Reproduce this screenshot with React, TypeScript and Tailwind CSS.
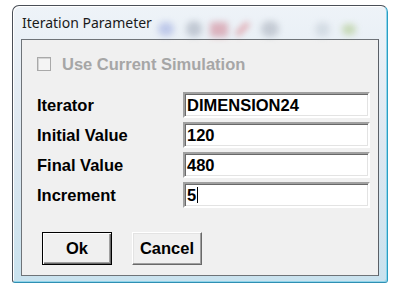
import React from "react";

const labelFont = { fontFamily: '"Liberation Sans", Arial, sans-serif' };

function Row({ label, value, caret }: { label: string; value: string; caret?: boolean }) {
  return (
    <div className="flex h-[26px] items-center">
      <div className="w-[146px] text-[16.5px] font-bold leading-none text-black">{label}</div>
      <div className="flex h-[26px] w-[187px] items-center border-2 border-t-[#a0a0a0] border-l-[#a0a0a0] border-b-[#ffffff] border-r-[#ffffff] bg-white pl-[2px] shadow-[inset_1px_1px_0_#696969,inset_-1px_-1px_0_#e3e3e3]">
        <span className="text-[16.5px] font-bold leading-none text-black">{value}</span>
        {caret && <span className="ml-[1px] h-[16px] w-[1px] bg-black" />}
      </div>
    </div>
  );
}

export default function App() {
  return (
    <div className="h-[289px] w-[400px] overflow-hidden bg-white pl-[12px] pt-[5px]" style={labelFont}>
      <div className="flex h-[278px] w-[376px] flex-col rounded-t-[7px] rounded-b-[3px] border border-[#4a4f57] border-r-[#2a9ec4] border-b-[#2f8fb3] bg-gradient-to-b from-[#eef3f8] via-[#dde7f0] to-[#c9e2ee] px-[8px] pb-[6px] shadow-[inset_1px_1px_0_#ffffff,inset_-1px_-1px_0_#8fd4ea]">
        <div className="flex h-[33px] items-start">
          <div
            className="ml-[1px] mt-[10px] text-[14px] leading-none text-[#1a1a1a]"
            style={{ fontFamily: '"Noto Sans", "Open Sans", sans-serif' }}
          >
            Iteration Parameter
          </div>
          <div className="ml-[6px] mt-[15px] flex items-center blur-[3px]">
            <div className="h-[14px] w-[16px] rounded-full bg-[#7d8fd6] opacity-40" />
            <div className="ml-[12px] h-[16px] w-[16px] rounded-full bg-[#8d97a8] opacity-45" />
            <div className="ml-[8px] h-[15px] w-[18px] rounded-[3px] bg-[#c4566a] opacity-40" />
            <div className="ml-[12px] h-[16px] w-[5px] rotate-45 bg-[#d04a55] opacity-45" />
            <div className="ml-[16px] h-[16px] w-[18px] rounded-full bg-[#8b94a3] opacity-40" />
            <div className="ml-[36px] h-[15px] w-[15px] rounded-full bg-[#b8c3cf] opacity-45" />
            <div className="ml-[12px] h-[11px] w-[14px] rounded-full bg-[#9cbc6b] opacity-45" />
          </div>
        </div>
        <div className="flex h-[238px] flex-col border border-[#6e7378] border-r-[#5a5f66] bg-[#f0f0f0] pl-[15px]">
          <div className="mt-[14px] flex h-[21px] items-center">
            <div className="h-[14px] w-[14px] border border-[#a9a9a9] bg-[#f4f4f4] shadow-[inset_1px_1px_0_#d4d4d4]" />
            <div className="ml-[11px] text-[16.5px] font-bold leading-none text-[#a6a6a6]">Use Current Simulation</div>
          </div>
          <div className="mt-[17px] flex flex-col gap-[4px]">
            <Row label="Iterator" value="DIMENSION24" />
            <Row label="Initial Value" value="120" />
            <Row label="Final Value" value="480" />
            <Row label="Increment" value="5" caret />
          </div>
          <div className="ml-[5px] mt-[24px] flex gap-[20px]">
            <button className="flex h-[33px] w-[70px] items-center justify-center border border-black bg-[#f0f0f0] shadow-[inset_1px_1px_0_#ffffff,inset_-1px_-1px_0_#696969,inset_-2px_-2px_0_#a0a0a0]">
              <span className="text-[16.5px] font-bold leading-none text-black">Ok</span>
            </button>
            <button className="flex h-[33px] w-[70px] items-center justify-center border border-[#ffffff] border-r-[#696969] border-b-[#696969] bg-[#f0f0f0] shadow-[inset_-1px_-1px_0_#a0a0a0,inset_1px_1px_0_#e3e3e3]">
              <span className="text-[16.5px] font-bold leading-none text-black">Cancel</span>
            </button>
          </div>
        </div>
      </div>
    </div>
  );
}
